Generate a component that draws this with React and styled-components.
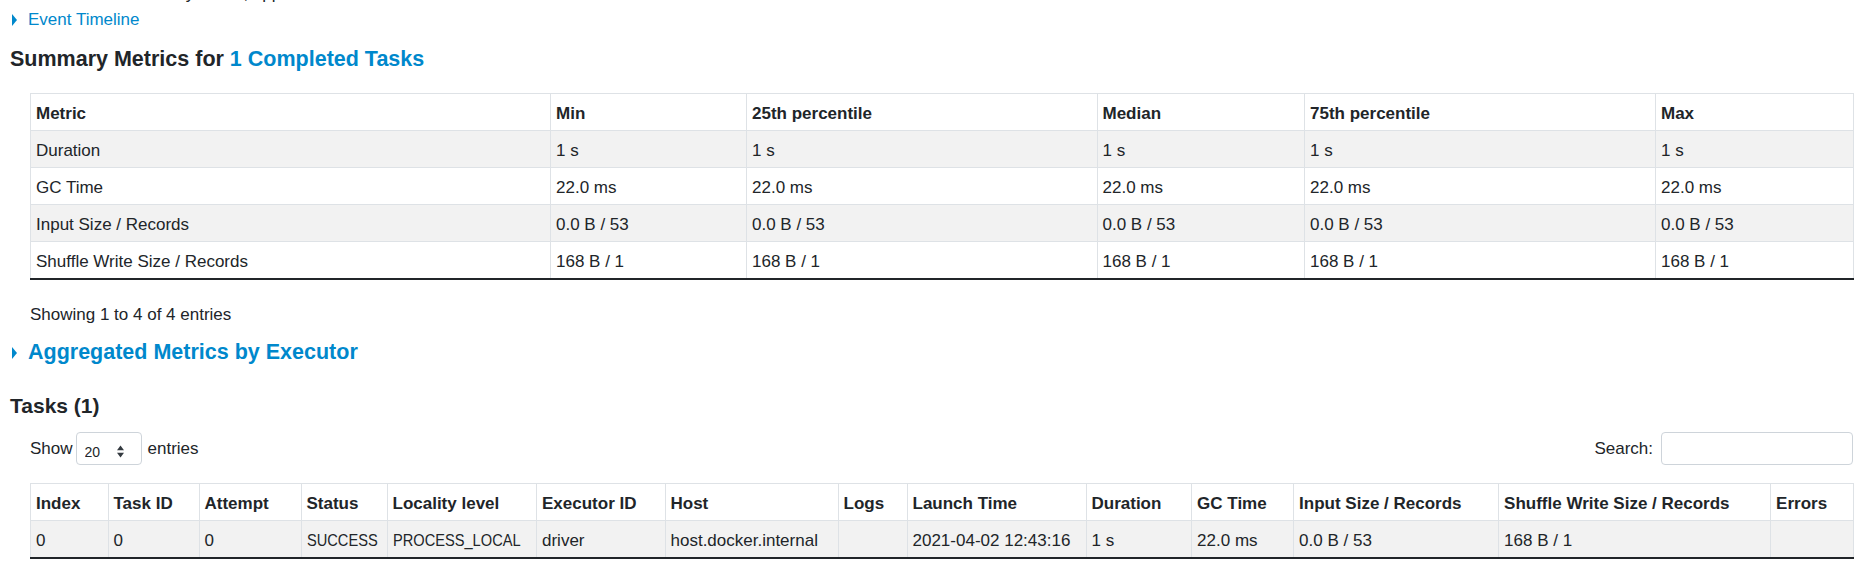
import React from 'react';
import styled, { createGlobalStyle } from 'styled-components';

const GlobalStyle = createGlobalStyle`
  html, body {
    margin: 0;
    padding: 0;
    background: #fff;
  }
  body {
    font-family: "Liberation Sans", Arial, sans-serif;
    font-size: 17px;
    line-height: 26px;
    color: #212529;
    overflow: hidden;
  }
`;

const Page = styled.div`
  padding: 0 5px 0 10px;
`;

const ClippedLine = styled.div`
  margin-top: -19px;
  height: 26px;
  white-space: nowrap;
`;

const Expander = styled.div`
  display: flex;
  align-items: center;
  height: ${(p) => (p.$big ? 25 : 26)}px;
`;

const Arrow = styled.span`
  width: 0;
  height: 0;
  border-top: 6px solid transparent;
  border-bottom: 6px solid transparent;
  border-left: 5px solid #0088cc;
  margin-left: 2px;
  margin-right: 11px;
`;

const Link = styled.a`
  color: #0088cc;
  text-decoration: none;
  cursor: pointer;
`;

const Heading = styled.h4`
  margin: ${(p) => p.$mt}px 0 0;
  font-size: ${(p) => p.$size || 21.5}px;
  line-height: 25px;
  font-weight: 700;
  color: #212529;
`;

const Section = styled.div`
  margin: ${(p) => p.$mt}px 0 0 ${(p) => (p.$flush ? 0 : 20)}px;
`;

const Table = styled.table`
  width: 100%;
  border-collapse: collapse;
  table-layout: fixed;
`;

const Col = styled.col`
  width: ${(p) => p.$w}px;
`;

const Th = styled.th`
  text-align: left;
  font-weight: 700;
  padding: 7px 5px 3px;
  border: 1px solid #dee2e6;
  line-height: 26px;
  white-space: nowrap;
  overflow: hidden;
`;

const Td = styled.td`
  padding: 7px 5px 3px;
  border: 1px solid #dee2e6;
  line-height: 26px;
  white-space: nowrap;
  overflow: hidden;
`;

// capitals in the original face are much narrower than in Arial
const Caps = styled.span`
  display: inline-block;
  transform: scaleX(0.86);
  transform-origin: left center;
`;

const BodyRow = styled.tr`
  background: ${(p) => (p.$striped ? '#f2f2f2' : '#fff')};
  &:last-child td {
    border-bottom: 2px solid #212529;
  }
`;

const Info = styled.div`
  margin-top: 22px;
  line-height: 26px;
`;

const Controls = styled.div`
  display: flex;
  justify-content: space-between;
  align-items: center;
  height: 33px;
`;

const Label = styled.label`
  display: flex;
  align-items: center;
  white-space: nowrap;
`;

const SelectBox = styled.div`
  display: flex;
  align-items: center;
  justify-content: space-between;
  box-sizing: border-box;
  width: 66px;
  height: 33px;
  margin: 0 6px 0 3px;
  padding: 6px 17px 0 8px;
  border: 1px solid #ced4da;
  border-radius: 4px;
  background: #fff;
`;

const Select = styled.select`
  appearance: none;
  border: none;
  background: transparent;
  padding: 0;
  margin: 0;
  font-family: "Liberation Sans", Arial, sans-serif;
  font-size: 14px;
  color: #212529;
  outline: none;
`;

const SearchInput = styled.input`
  box-sizing: border-box;
  width: 192px;
  height: 33px;
  margin-left: 8px;
  border: 1px solid #ced4da;
  border-radius: 4px;
  background: #fff;
  outline: none;
`;

const summaryCols = [
  ['Metric', 520],
  ['Min', 196],
  ['25th percentile', 350.5],
  ['Median', 207.5],
  ['75th percentile', 351],
  ['Max', 198],
];

const summaryRows = [
  ['Duration', '1 s'],
  ['GC Time', '22.0 ms'],
  ['Input Size / Records', '0.0 B / 53'],
  ['Shuffle Write Size / Records', '168 B / 1'],
];

const taskCols = [
  ['Index', 77.5],
  ['Task ID', 91],
  ['Attempt', 102],
  ['Status', 86],
  ['Locality level', 149.5],
  ['Executor ID', 128.5],
  ['Host', 173],
  ['Logs', 69],
  ['Launch Time', 179],
  ['Duration', 105.6],
  ['GC Time', 102],
  ['Input Size / Records', 205],
  ['Shuffle Write Size / Records', 272],
  ['Errors', 82.8],
];

const taskRows = [
  [
    '0',
    '0',
    '0',
    'SUCCESS',
    'PROCESS_LOCAL',
    'driver',
    'host.docker.internal',
    '',
    '2021-04-02 12:43:16',
    '1 s',
    '22.0 ms',
    '0.0 B / 53',
    '168 B / 1',
    '',
  ],
];

const isCaps = (s) => /^[A-Z_]{4,}$/.test(s);

const SortIcon = () => (
  <svg width="7" height="13" viewBox="0 0 7 13">
    <path d="M0 5.2 L3.5 0.5 L7 5.2 Z M0 7.8 L3.5 12.5 L7 7.8 Z" fill="#343a40" />
  </svg>
);

const DataTable = ({ cols, rows }) => (
  <Table>
    <colgroup>
      {cols.map(([name, w]) => (
        <Col key={name} $w={w} />
      ))}
    </colgroup>
    <thead>
      <tr>
        {cols.map(([name]) => (
          <Th key={name}>{name}</Th>
        ))}
      </tr>
    </thead>
    <tbody>
      {rows.map((row, i) => (
        <BodyRow key={i} $striped={i % 2 === 0}>
          {row.map((cell, j) => (
            <Td key={j}>{isCaps(cell) ? <Caps>{cell}</Caps> : cell}</Td>
          ))}
        </BodyRow>
      ))}
    </tbody>
  </Table>
);

export default function App() {
  const summaryData = summaryRows.map(([name, v]) => [name, v, v, v, v, v]);

  return (
    <>
      <GlobalStyle />
      <Page>
        <ClippedLine>Peak Execution Memory: 0.0 B, applied</ClippedLine>
        <Expander>
          <Arrow />
          <Link>Event Timeline</Link>
        </Expander>

        <Heading $mt={14}>
          Summary Metrics for <Link>1 Completed Tasks</Link>
        </Heading>
        <Section $mt={21}>
          <DataTable cols={summaryCols} rows={summaryData} />
          <Info>Showing 1 to 4 of 4 entries</Info>
        </Section>

        <Heading $mt={12}>
          <Expander $big>
            <Arrow />
            <Link>Aggregated Metrics by Executor</Link>
          </Expander>
        </Heading>

        <Heading $mt={28} $size={21}>
          Tasks (1)
        </Heading>
        <Section $mt={14}>
          <Controls>
            <Label>
              Show
              <SelectBox>
                <Select defaultValue="20">
                  <option value="20">20</option>
                  <option value="40">40</option>
                  <option value="60">60</option>
                  <option value="100">100</option>
                </Select>
                <SortIcon />
              </SelectBox>
              entries
            </Label>
            <Label>
              Search:
              <SearchInput type="search" />
            </Label>
          </Controls>
          <Section $mt={18} $flush>
            <DataTable cols={taskCols} rows={taskRows} />
          </Section>
        </Section>
      </Page>
    </>
  );
}
